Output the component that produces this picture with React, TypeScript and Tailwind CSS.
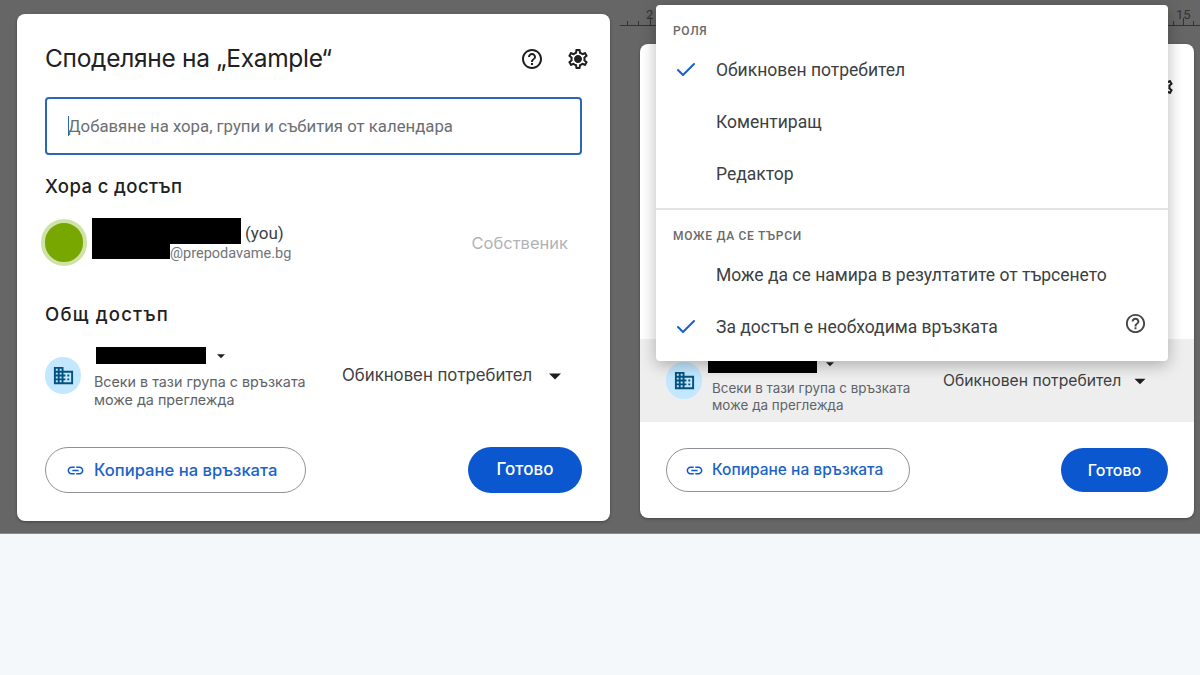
import { Check } from "lucide-react";

const helpPath =
  "M11 18h2v-2h-2v2zm1-16C6.48 2 2 6.48 2 12s4.48 10 10 10 10-4.48 10-10S17.52 2 12 2zm0 18c-4.41 0-8-3.59-8-8s3.59-8 8-8 8 3.59 8 8-3.59 8-8 8zm0-14c-2.21 0-4 1.79-4 4h2c0-1.1.9-2 2-2s2 .9 2 2c0 2-3 1.75-3 5h2c0-2.25 3-2.5 3-5 0-2.21-1.79-4-4-4z";
const gearPath =
  "M19.43 12.98c.04-.32.07-.64.07-.98 0-.34-.03-.66-.07-.98l2.11-1.65c.19-.15.24-.42.12-.64l-2-3.46c-.09-.16-.26-.25-.44-.25-.06 0-.12.01-.17.03l-2.49 1c-.52-.4-1.08-.73-1.69-.98l-.38-2.65C14.46 2.18 14.25 2 14 2h-4c-.25 0-.46.18-.49.42l-.38 2.65c-.61.25-1.17.59-1.69.98l-2.49-1c-.06-.02-.12-.03-.18-.03-.17 0-.34.09-.43.25l-2 3.46c-.13.22-.07.49.12.64l2.11 1.65c-.04.32-.07.65-.07.98 0 .33.03.66.07.98l-2.11 1.65c-.19.15-.24.42-.12.64l2 3.46c.09.16.26.25.44.25.06 0 .12-.01.17-.03l2.49-1c.52.4 1.08.73 1.69.98l.38 2.65c.03.24.24.42.49.42h4c.25 0 .46-.18.49-.42l.38-2.65c.61-.25 1.17-.59 1.69-.98l2.49 1c.06.02.12.03.18.03.17 0 .34-.09.43-.25l2-3.46c.12-.22.07-.49-.12-.64l-2.11-1.65zm-1.98-1.71c.04.31.05.52.05.73 0 .21-.02.43-.05.73l-.14 1.13.89.7 1.08.84-.7 1.21-1.27-.51-1.04-.42-.9.68c-.43.32-.84.56-1.25.73l-1.06.43-.16 1.13-.2 1.35h-1.4l-.19-1.35-.16-1.13-1.06-.43c-.43-.18-.83-.41-1.23-.71l-.91-.7-1.06.43-1.27.51-.7-1.21 1.08-.84.89-.7-.14-1.13c-.03-.31-.05-.54-.05-.74s.02-.43.05-.73l.14-1.13-.89-.7-1.08-.84.7-1.21 1.27.51 1.04.42.9-.68c.43-.32.84-.56 1.25-.73l1.06-.43.16-1.13.2-1.35h1.39l.19 1.35.16 1.13 1.06.43c.43.18.83.41 1.23.71l.91.7 1.06-.43 1.27-.51.7 1.21-1.07.85-.89.7.14 1.13zM12 8c-2.21 0-4 1.79-4 4s1.79 4 4 4 4-1.79 4-4-1.79-4-4-4z";
const domainPath =
  "M12 7V3H2v18h20V7H12zM6 19H4v-2h2v2zm0-4H4v-2h2v2zm0-4H4V9h2v2zm0-4H4V5h2v2zm4 12H8v-2h2v2zm0-4H8v-2h2v2zm0-4H8V9h2v2zm0-4H8V5h2v2zm10 12h-8v-2h2v-2h-2v-2h2v-2h-2V9h8v10zm-2-8h-2v2h2v-2zm0 4h-2v2h2v-2z";
const linkPath =
  "M3.9 12c0-1.71 1.39-3.1 3.1-3.1h4V7H7c-2.76 0-5 2.24-5 5s2.24 5 5 5h4v-1.9H7c-1.71 0-3.1-1.39-3.1-3.1zM8 13h8v-2H8v2zm9-6h-4v1.9h4c1.71 0 3.1 1.39 3.1 3.1s-1.39 3.1-3.1 3.1h-4V17h4c2.76 0 5-2.24 5-5s-2.24-5-5-5z";

function Icon({ d, className }: { d: string; className: string }) {
  return (
    <svg viewBox="0 0 24 24" fill="currentColor" className={className}>
      <path d={d} />
    </svg>
  );
}

function Caret({ className }: { className: string }) {
  return <Icon d="M6 9.5l6 6 6-6z" className={className} />;
}

function GroupIcon({ className }: { className: string }) {
  return (
    <div className={`flex h-[37px] w-[36px] shrink-0 items-center justify-center rounded-full bg-[#c2e7ff] ${className}`}>
      <Icon d={domainPath} className="h-[23px] w-[23px] text-[#04527f]" />
    </div>
  );
}

function MenuRow({ label, checked, help }: { label: string; checked?: boolean; help?: boolean }) {
  return (
    <div className="flex h-[52px] items-center">
      <div className="flex w-[60px] justify-center">
        {checked && <Check className="h-[24px] w-[24px] text-[#1a5fc8]" strokeWidth={2} />}
      </div>
      <span className="flex-1 text-[17.5px] text-[#3c4043]">{label}</span>
      {help && <Icon d={helpPath} className="mb-[7px] mr-[21px] h-[23px] w-[23px] text-[#444746]" />}
    </div>
  );
}

function RoleMenu() {
  return (
    <div className="absolute left-[16px] top-[-39px] z-10 h-[356px] w-[512px] rounded-[4px] bg-white shadow-[0_4px_16px_rgba(0,0,0,0.28)]">
      <div className="h-[205px] border-b-2 border-[#e3e3e3]">
        <div className="pb-[4px] pl-[17px] pt-[19px] text-[12px] font-medium leading-[14px] tracking-[0.7px] text-[#6a6a6a]">
          РОЛЯ
        </div>
        <div className="mt-[2px]">
          <MenuRow label="Обикновен потребител" checked />
          <MenuRow label="Коментиращ" />
          <MenuRow label="Редактор" />
        </div>
      </div>
      <div className="pb-[6px] pl-[17px] pt-[19px] text-[12px] font-medium leading-[14px] tracking-[0.7px] text-[#6a6a6a]">
        МОЖЕ ДА СЕ ТЪРСИ
      </div>
      <MenuRow label="Може да се намира в резултатите от търсенето" />
      <MenuRow label="За достъп е необходима връзката" checked help />
    </div>
  );
}

function Ruler() {
  return (
    <svg viewBox="0 0 580 30" className="absolute left-[620px] top-0 h-[30px] w-[580px]" fill="none" stroke="#333">
      <path d="M0 25.5H580M7.5 21V25M18.5 21V25M30.5 17V25M553.5 21V25M563.5 18V25M573.5 21V25" strokeWidth="1" />
      <text x="26" y="19" fill="#333" stroke="none" fontSize="13" fontFamily="Roboto, sans-serif">2</text>
      <text x="556" y="19" fill="#333" stroke="none" fontSize="13" fontFamily="Roboto, sans-serif">15</text>
    </svg>
  );
}

export default function App() {
  return (
    <div lang="bg" className="min-h-[675px] bg-[#f4f8fb] font-['Roboto',sans-serif]">
      <div className="relative flex h-[534px] items-start overflow-hidden bg-[#666666] pl-[17px] [box-shadow:inset_0_-1px_0_#8a8a8a]">
        <Ruler />

        {/* left dialog */}
        <div className="mt-[14px] flex h-[507px] w-[593px] flex-col rounded-[8px] bg-white px-[28px] shadow-[0_1px_3px_rgba(0,0,0,0.35)]">
          <div className="flex h-[66px] items-end justify-between">
            <h1 className="mb-[7px] font-['Inter',sans-serif] text-[24.5px] font-normal leading-[30px] tracking-[-0.3px] text-[#202124]">
              Споделяне на „Example“
            </h1>
            <div className="mb-[9px] flex gap-[22px]">
              <Icon d={helpPath} className="h-[24px] w-[24px] text-[#1f1f1f]" />
              <Icon d={gearPath} className="-mr-[8px] h-[24px] w-[24px] text-[#1f1f1f]" />
            </div>
          </div>
          <div className="mt-[17px] flex h-[58px] w-[537px] items-center rounded-[4px] border-2 border-[#2a67b5] pl-[21px]">
            <span className="mr-[-1px] h-[20px] w-[1px] bg-[#2a67b5]" />
            <span className="mt-[1px] text-[16.75px] text-[#6b6f73]">Добавяне на хора, групи и събития от календара</span>
          </div>
          <h2 className="mt-[21px] font-['Inter',sans-serif] text-[18.5px] font-medium leading-[20px] tracking-[0.4px] text-[#202124]">Хора с достъп</h2>
          <div className="mt-[22px] flex h-[44px] items-start">
            <div className="-ml-[4px] mt-[1px] h-[47px] w-[46px] shrink-0 rounded-full border-[4px] border-[#cfe3a8] bg-[#78a700]" />
            <div className="ml-[5px] h-[41px] w-[210px]">
              <div className="flex h-[26px] items-center">
                <div className="h-[26px] w-[149px] bg-black" />
                <span className="ml-[4px] mt-[6px] text-[17px] text-[#3c4043]">(you)</span>
              </div>
              <div className="flex h-[15px] items-center">
                <div className="h-[15px] w-[78px] bg-black" />
                <span className="mt-[4px] text-[14.5px] text-[#70757a]">@prepodavame.bg</span>
              </div>
            </div>
            <span className="ml-auto mr-[14px] mt-[15px] font-['Inter',sans-serif] text-[16.5px] leading-[20px] text-[#b0b3b6]">Собственик</span>
          </div>
          <h2 className="mt-[42px] font-['Inter',sans-serif] text-[18.5px] font-medium leading-[20px] tracking-[1.2px] text-[#202124]">Общ достъп</h2>
          <div className="mt-[22px] flex items-center">
            <GroupIcon className="mb-[5px]" />
            <div className="ml-[13px] w-[248px]">
              <div className="flex h-[19px] items-center pl-[2px]">
                <div className="h-[17px] w-[110px] bg-black" />
                <Caret className="ml-[7px] h-[16px] w-[16px] text-[#1f1f1f]" />
              </div>
              <p className="mt-[8px] whitespace-nowrap font-['Inter',sans-serif] text-[14.3px] leading-[18px] text-[#5f6368]">
                Всеки в тази група с връзката
                <br />
                може да преглежда
              </p>
            </div>
            <span className="mb-[4px] whitespace-nowrap font-['Inter',sans-serif] text-[16.75px] text-[#3c4043]">Обикновен потребител</span>
            <Caret className="mb-[4px] ml-[11px] h-[24px] w-[24px] text-[#1f1f1f]" />
          </div>
          <div className="mt-[38px] flex justify-between">
            <div className="flex h-[46px] w-[261px] items-center gap-[9px] rounded-full border border-[#8e9296] pl-[20px]">
              <Icon d={linkPath} className="h-[19px] w-[19px] text-[#0b57d0]" />
              <span className="font-['Inter',sans-serif] text-[16.6px] font-medium text-[#1a63c8]">Копиране на връзката</span>
            </div>
            <div className="flex h-[46px] w-[114px] items-center justify-center rounded-full bg-[#0b57d0] font-['Inter',sans-serif] text-[17px] font-medium text-white">
              Готово
            </div>
          </div>
        </div>

        {/* right dialog with the open role menu */}
        <div className="relative ml-[30px] mt-[44px] h-[474px] w-[554px] rounded-[8px] bg-white shadow-[0_1px_3px_rgba(0,0,0,0.35)]">
          <div className="flex h-[295px] justify-end pr-[19px] pt-[31px]">
            <Icon d={gearPath} className="h-[24px] w-[24px] text-[#1f1f1f]" />
          </div>
          <div className="flex h-[83px] items-center bg-[#eeeeee] pl-[26px]">
            <GroupIcon className="" />
            <div className="ml-[10px] mt-[7px] w-[231px]">
              <div className="flex h-[19px] items-center">
                <div className="-ml-[4px] h-[17px] w-[109px] bg-black" />
                <Caret className="ml-[5px] h-[16px] w-[16px] text-[#1f1f1f]" />
              </div>
              <p className="mt-[6px] whitespace-nowrap font-['Inter',sans-serif] text-[13.4px] leading-[17px] text-[#5f6368]">
                Всеки в тази група с връзката
                <br />
                може да преглежда
              </p>
            </div>
            <span className="whitespace-nowrap font-['Inter',sans-serif] text-[15.7px] text-[#3c4043]">Обикновен потребител</span>
            <Caret className="ml-[8px] h-[22px] w-[22px] text-[#1f1f1f]" />
          </div>
          <div className="mx-[26px] mt-[26px] flex justify-between">
            <div className="flex h-[44px] w-[244px] items-center gap-[8px] rounded-full border border-[#8e9296] pl-[18px]">
              <Icon d={linkPath} className="h-[19px] w-[19px] text-[#0b57d0]" />
              <span className="font-['Inter',sans-serif] text-[15.5px] font-medium text-[#1a63c8]">Копиране на връзката</span>
            </div>
            <div className="flex h-[44px] w-[107px] items-center justify-center rounded-full bg-[#0b57d0] font-['Inter',sans-serif] text-[16px] font-medium text-white">
              Готово
            </div>
          </div>
          <RoleMenu />
        </div>
      </div>
    </div>
  );
}
